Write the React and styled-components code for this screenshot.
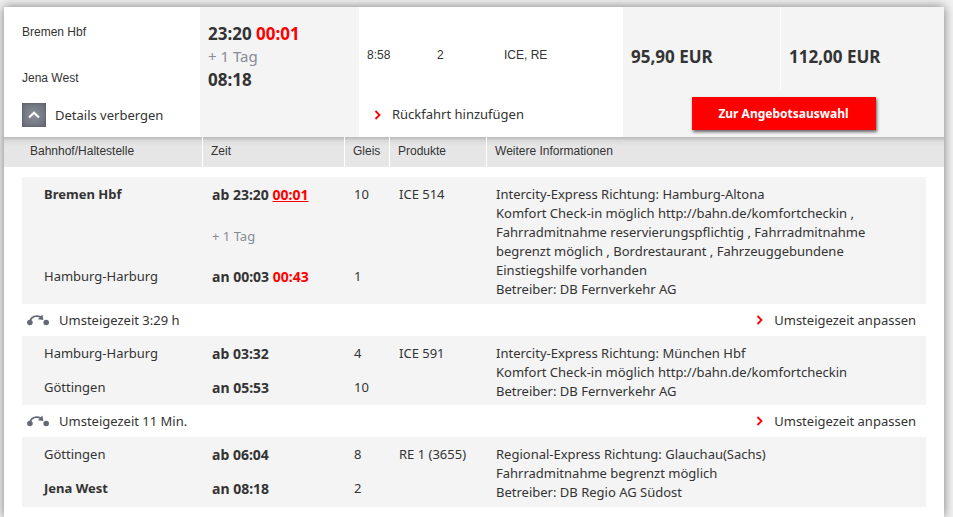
import React from "react";
import styled, { createGlobalStyle } from "styled-components";

const GlobalStyle = createGlobalStyle`
  *, *::before, *::after { box-sizing: border-box; }
  body {
    margin: 0;
    background: #f2f2f2;
    color: #333;
    font: 13px/19px "Noto Sans", "Open Sans", sans-serif;
  }
  button { font: inherit; color: inherit; cursor: pointer; }
`;

const Card = styled.main`
  margin: 7px 9px 0 4px;
  padding-bottom: 10px;
  background: #fff;
  box-shadow: 0 0 10px rgba(0, 0, 0, 0.5);
`;

const Summary = styled.section`
  display: grid;
  grid-template-columns: 196px 159px 1fr 321px;
  grid-template-rows: 83px 47px;
`;

const Stations = styled.div`
  display: flex;
  flex-direction: column;
  gap: 23px;
  padding: 14px 18px 0;
  font: 12px/23px "Liberation Sans", Arial, sans-serif;
`;

const Times = styled.div`
  grid-row: span 2;
  padding: 15px 8px 0;
  background: #f4f4f4;
  font-size: 17px;
  line-height: 23px;
  font-weight: 700;
`;

const Delay = styled.span`
  color: #f00;
`;

const DelayLink = styled.a`
  color: #f00;
`;

const DayNote = styled.div`
  color: #878c96;
  font-size: 15px;
  font-weight: 400;
`;

const Facts = styled.div`
  display: grid;
  grid-template-columns: 70px 67px 1fr;
  align-items: center;
  padding: 13px 8px 0;
  font: 12px/23px "Liberation Sans", Arial, sans-serif;
`;

const Offers = styled.div`
  grid-row: 1 / span 2;
  grid-column: 4;
  background: #f4f4f4;
`;

const Prices = styled.div`
  display: grid;
  grid-template-columns: 157px 1fr;
  height: 83px;
`;

const Price = styled.div`
  padding: 38px 8px 0;
  font-size: 17px;
  line-height: 23px;
  font-weight: 700;

  & + & { border-left: 1px solid #fff; }
`;

const OfferButton = styled.button`
  display: block;
  width: 184px;
  height: 33px;
  margin: 7px auto 0;
  padding: 0;
  border: 0;
  background: #f00;
  color: #fff;
  font-size: 12px;
  font-weight: 700;
  box-shadow: 1px 2px 3px rgba(0, 0, 0, 0.6);
`;

const ToggleButton = styled.button`
  display: flex;
  align-items: center;
  gap: 9px;
  height: 24px;
  margin: 13px 18px 0;
  padding: 0;
  border: 0;
  background: none;
`;

const ToggleIcon = styled.span`
  display: grid;
  place-items: center;
  width: 24px;
  height: 24px;
  background: radial-gradient(#8a8e98, #646973);
  box-shadow: inset 0 0 3px #555a63;
`;

const ActionLink = styled.a`
  display: inline-flex;
  align-items: center;
  gap: 10px;
  color: inherit;
  text-decoration: none;
`;

const ReturnTrip = styled.div`
  padding: 15px 15px 0;
`;

const Itinerary = styled.table`
  width: 100%;
  table-layout: fixed;
  border-collapse: separate;
  border-spacing: 0;
`;

const Col = styled.col`
  width: ${(p) => p.$width}px;
`;

const HeadCell = styled.th`
  height: 30px;
  padding: 0 8px 2px ${(p) => (p.$first ? 26 : 8)}px;
  border-right: ${(p) => (p.$last ? 0 : 1)}px solid #fff;
  background: linear-gradient(#b8b8b8, #dcdcdc 4px, #e6e6e6 9px);
  font: 12px/15px "Liberation Sans", Arial, sans-serif;
  text-align: left;
`;

const Spacer = styled.td`
  height: 10px;
  padding: 0;
`;

const Gutter = styled.td`
  padding: 0;
`;

const Cell = styled.td`
  height: ${(p) => p.$height}px;
  padding: 8px 0 0 9px;
  background: #f4f4f4;
  vertical-align: top;
  font-weight: ${(p) => (p.$bold ? 700 : 400)};
`;

const StationCell = styled(Cell)`
  padding-left: 22px;
`;

const TimeCell = styled(Cell)`
  font-size: 14px;
  font-weight: 700;
`;

const LegNote = styled.div`
  padding-top: 23px;
  color: #878c96;
  font-size: 13px;
  font-weight: 400;
`;

const InfoCell = styled(Cell)`
  padding-right: 48px;
`;

const TransferCell = styled.td`
  height: 32px;
  padding: 0 10px 0 5px;
`;

const TransferBar = styled.div`
  display: flex;
  align-items: center;
  justify-content: space-between;
`;

const TransferTime = styled.span`
  display: flex;
  align-items: center;
  gap: 10px;
`;

function ArrowRight() {
  return (
    <svg width="8" height="10" viewBox="0 0 8 10" aria-hidden="true">
      <path d="M1.5 1 L5.5 5 L1.5 9" fill="none" stroke="#f00" strokeWidth="1.8" />
    </svg>
  );
}

function ArrowUp() {
  return (
    <svg width="12" height="8" viewBox="0 0 12 8" aria-hidden="true">
      <path d="M1 6.5 L6 1.7 L11 6.5" fill="none" stroke="#fff" strokeWidth="2" />
    </svg>
  );
}

function TransferIcon() {
  return (
    <svg width="22" height="12" viewBox="0 0 22 12" aria-hidden="true">
      <g fill="#646973">
        <circle cx="2.9" cy="8.5" r="2.8" />
        <circle cx="19.2" cy="8.5" r="2.8" />
        <path d="M15.3 0.4 L16.5 6 L10.9 5.3 Z" />
      </g>
      <path d="M3 7 C4.5 2.2 9 1 14.2 3.2" fill="none" stroke="#646973" strokeWidth="1.7" />
    </svg>
  );
}

const legs = [
  {
    from: { station: "Bremen Hbf", bold: true, time: "ab 23:20", delay: "00:01", platform: "10", note: "+ 1 Tag" },
    to: { station: "Hamburg-Harburg", time: "an 00:03", delay: "00:43", platform: "1" },
    product: "ICE 514",
    heights: [82, 45],
    info: [
      "Intercity-Express Richtung: Hamburg-Altona",
      "Komfort Check-in möglich http://bahn.de/komfortcheckin , Fahrradmitnahme reservierungspflichtig , Fahrradmitnahme begrenzt möglich , Bordrestaurant , Fahrzeuggebundene Einstiegshilfe vorhanden",
      "Betreiber: DB Fernverkehr AG",
    ],
    transfer: "Umsteigezeit 3:29 h",
  },
  {
    from: { station: "Hamburg-Harburg", time: "ab 03:32", platform: "4" },
    to: { station: "Göttingen", time: "an 05:53", platform: "10" },
    product: "ICE 591",
    heights: [34, 35],
    info: [
      "Intercity-Express Richtung: München Hbf",
      "Komfort Check-in möglich http://bahn.de/komfortcheckin",
      "Betreiber: DB Fernverkehr AG",
    ],
    transfer: "Umsteigezeit 11 Min.",
  },
  {
    from: { station: "Göttingen", time: "ab 06:04", platform: "8" },
    to: { station: "Jena West", bold: true, time: "an 08:18", platform: "2" },
    product: "RE 1 (3655)",
    heights: [34, 36],
    info: [
      "Regional-Express Richtung: Glauchau(Sachs)",
      "Fahrradmitnahme begrenzt möglich",
      "Betreiber: DB Regio AG Südost",
    ],
  },
];

function Leg({ leg }) {
  const { from, to, heights } = leg;
  return (
    <tbody>
      <tr>
        <Gutter rowSpan={2} />
        <StationCell $height={heights[0]} $bold={from.bold}>{from.station}</StationCell>
        <TimeCell>
          {from.time} {from.delay && <DelayLink href="#aktuell">{from.delay}</DelayLink>}
          {from.note && <LegNote>{from.note}</LegNote>}
        </TimeCell>
        <Cell>{from.platform}</Cell>
        <Cell rowSpan={2}>{leg.product}</Cell>
        <InfoCell rowSpan={2}>
          {leg.info.map((line) => <div key={line}>{line}</div>)}
        </InfoCell>
        <Gutter rowSpan={2} />
      </tr>
      <tr>
        <StationCell $height={heights[1]} $bold={to.bold}>{to.station}</StationCell>
        <TimeCell>
          {to.time} {to.delay && <Delay>{to.delay}</Delay>}
        </TimeCell>
        <Cell>{to.platform}</Cell>
      </tr>
      {leg.transfer && (
        <tr>
          <Gutter />
          <TransferCell colSpan={5}>
            <TransferBar>
              <TransferTime><TransferIcon />{leg.transfer}</TransferTime>
              <ActionLink href="#umsteigezeit"><ArrowRight />Umsteigezeit anpassen</ActionLink>
            </TransferBar>
          </TransferCell>
          <Gutter />
        </tr>
      )}
    </tbody>
  );
}

export default function App() {
  return (
    <>
      <GlobalStyle />
      <Card>
        <Summary>
          <Stations>
            <span>Bremen Hbf</span>
            <span>Jena West</span>
          </Stations>
          <Times>
            <div>23:20 <Delay>00:01</Delay></div>
            <DayNote>+ 1 Tag</DayNote>
            <div>08:18</div>
          </Times>
          <Facts>
            <span>8:58</span>
            <span>2</span>
            <span>ICE, RE</span>
          </Facts>
          <Offers>
            <Prices>
              <Price>95,90 EUR</Price>
              <Price>112,00 EUR</Price>
            </Prices>
            <OfferButton type="button">Zur Angebotsauswahl</OfferButton>
          </Offers>
          <ToggleButton type="button" aria-expanded="true">
            <ToggleIcon><ArrowUp /></ToggleIcon>
            Details verbergen
          </ToggleButton>
          <ReturnTrip>
            <ActionLink href="#rueckfahrt"><ArrowRight />Rückfahrt hinzufügen</ActionLink>
          </ReturnTrip>
        </Summary>
        <Itinerary>
          <colgroup>
            <Col $width={18} />
            <Col $width={181} />
            <Col $width={142} />
            <Col $width={45} />
            <Col $width={97} />
            <col />
            <Col $width={18} />
          </colgroup>
          <thead>
            <tr>
              <HeadCell colSpan={2} $first>Bahnhof/Haltestelle</HeadCell>
              <HeadCell>Zeit</HeadCell>
              <HeadCell>Gleis</HeadCell>
              <HeadCell>Produkte</HeadCell>
              <HeadCell colSpan={2} $last>Weitere Informationen</HeadCell>
            </tr>
            <tr><Spacer colSpan={7} /></tr>
          </thead>
          {legs.map((leg) => <Leg key={leg.product} leg={leg} />)}
        </Itinerary>
      </Card>
    </>
  );
}
